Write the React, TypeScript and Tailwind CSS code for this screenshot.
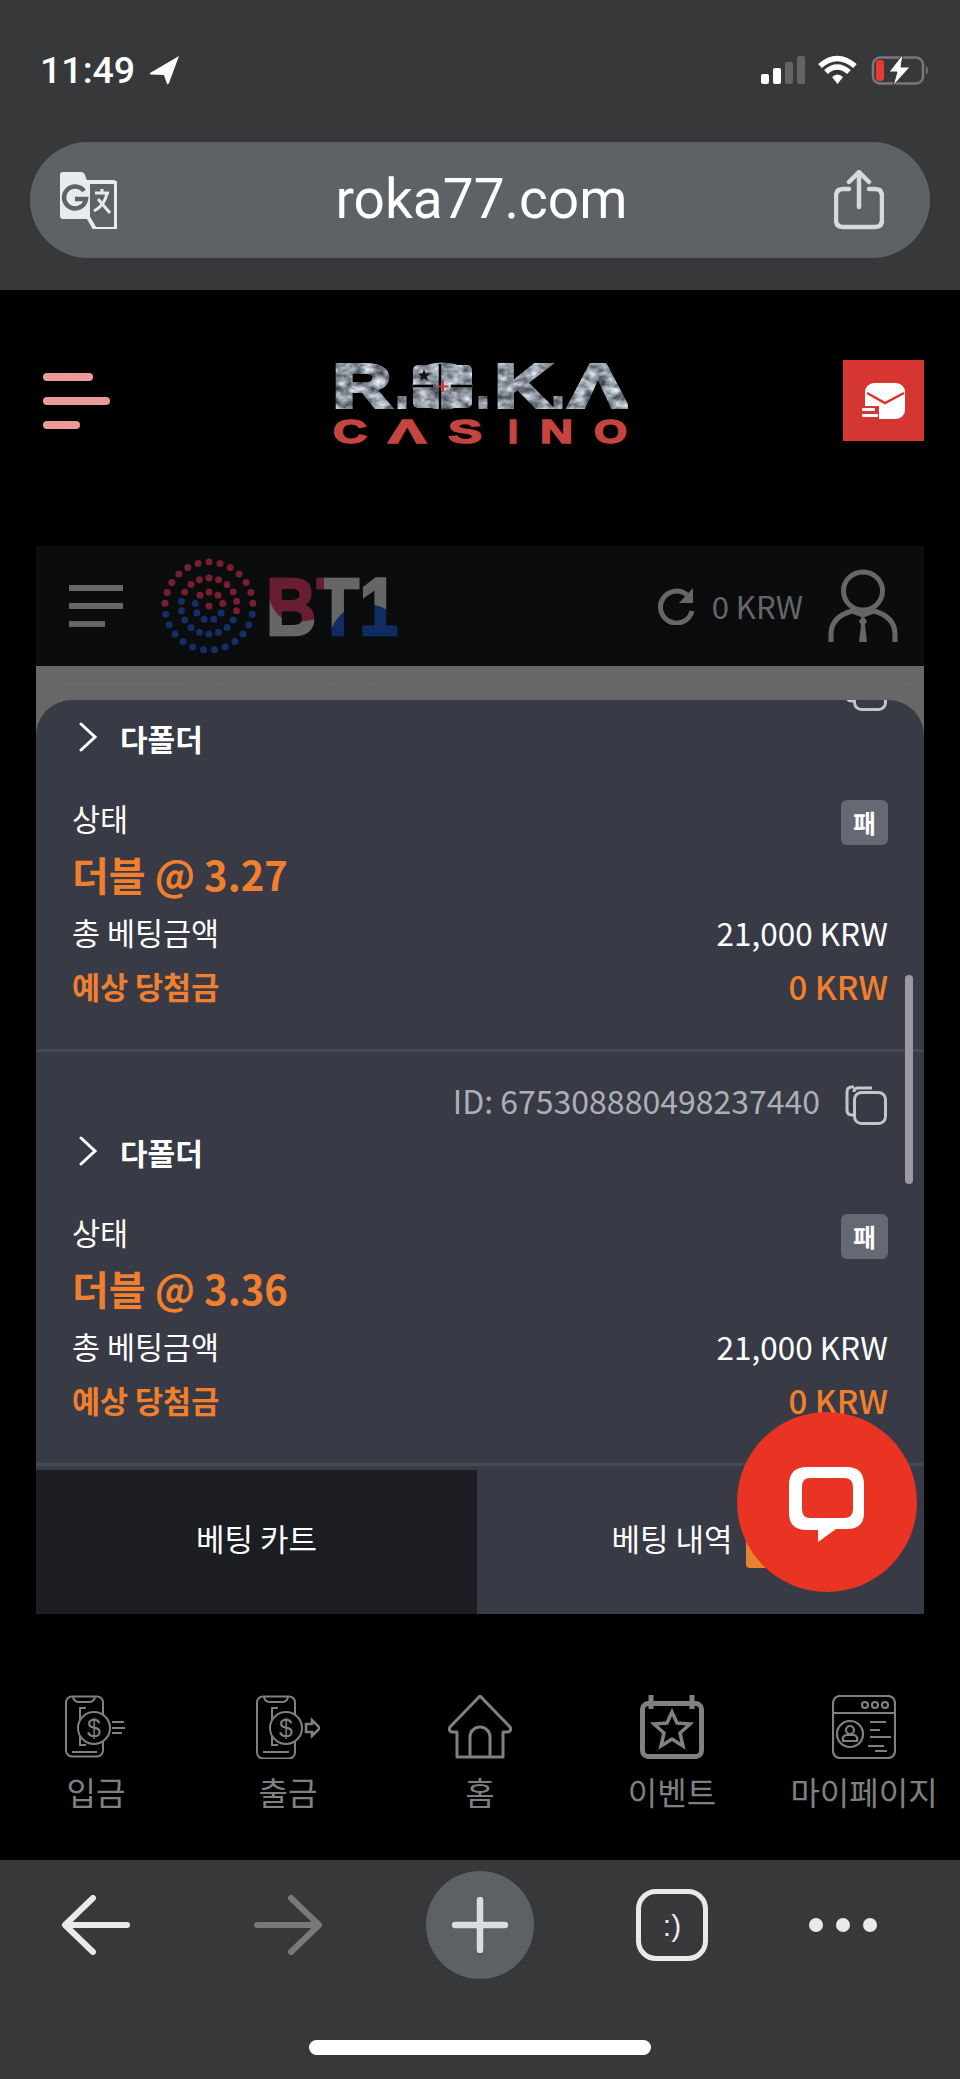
import React from 'react';

interface BetItem {
  id: string;
  odds: string;
}

const bets: BetItem[] = [
  { id: '675308880498237439', odds: '3.27' },
  { id: '675308880498237440', odds: '3.36' },
];

const sphereDots = () => {
  const rings = [
    { r: 44, n: 25 },
    { r: 28, n: 18 },
    { r: 14, n: 9 },
    { r: 0, n: 1 },
  ];
  const dots: { x: number; y: number; c: string }[] = [];
  rings.forEach((ring) => {
    for (let i = 0; i < ring.n; i++) {
      const a = (i / ring.n) * Math.PI * 2 - Math.PI / 2;
      const x = 46 + Math.cos(a) * ring.r;
      const y = 46 + Math.sin(a) * ring.r;
      const wave = Math.sin((x / 92) * Math.PI * 2) * 6;
      dots.push({ x, y, c: y + wave <= 46 ? '#74202f' : '#142f66' });
    }
  });
  return dots;
};

const CopyIcon = () => (
  <svg width="44" height="42" viewBox="0 0 44 42" fill="none" stroke="#c4c5ca" strokeWidth="3">
    <path d="M10 4 H8 Q3 4 3 9 V27 Q3 32 8 32 H9" />
    <path d="M14 5 Q10 5 10 9 M14 5 H28" />
    <rect x="10.500" y="9.500" width="31" height="31" rx="7" />
  </svg>
);

const Chevron = () => (
  <svg width="20" height="30" viewBox="0 0 20 30" fill="none" stroke="#fff" strokeWidth="3" strokeLinecap="round">
    <path d="M3 2 L17 15 L3 28" />
  </svg>
);

const BetRow = ({ bet }: { bet: BetItem }) => (
  <div className="flex flex-col border-b-[3px] border-[#464856] pl-[36px] pr-[36px] pb-[42px] pt-[30px]">
    <div className="flex h-[44px] items-center justify-end gap-[24px] text-[32px] text-[#aeafb6]">
      <span className="pb-[8px]">ID: {bet.id}</span>
      <CopyIcon />
    </div>
    <div className="mt-[5px] flex h-[40px] items-center gap-[22px] pl-[6px] text-[30px] font-bold text-white">
      <Chevron />
      <span className="pt-[3px]">다폴더</span>
    </div>
    <div className="mt-[43px] flex h-[45px] items-center justify-between text-[30.500px] text-white">
      <span className="pb-[8px]">상태</span>
      <span className="flex h-[45px] w-[47px] items-center justify-center rounded-[6px] bg-[#666873] text-[25px] font-bold">패</span>
    </div>
    <div className="mt-[7px] flex h-[44px] items-center text-[40px] font-bold text-[#f07f2e]">더블 @ {bet.odds}</div>
    <div className="mt-[17px] flex h-[40px] items-center justify-between text-[30.500px] text-white">
      <span>총 베팅금액</span>
      <span className="text-[31.500px]">21,000 KRW</span>
    </div>
    <div className="mt-[14px] flex h-[40px] items-center justify-between text-[30.500px] font-bold text-[#f07f2e]">
      <span>예상 당첨금</span>
      <span className="text-[33px] font-medium">0 KRW</span>
    </div>
  </div>
);

const StatusBar = () => (
  <div className="flex h-[142px] items-start justify-between pl-[40px] pr-[29px] pt-[46px]">
    <div className="flex items-center gap-[13px]">
      <span className="font-['Roboto',sans-serif] text-[37.500px] font-medium leading-[48px] text-white">11:49</span>
      <svg width="32" height="30" viewBox="0 0 32 30" fill="#fff">
        <path d="M31 1 L2 18 Q1 19 3 19.500 L16 20 L19 29 Q20 30 21 28 Z" />
      </svg>
    </div>
    <div className="flex items-center pt-[8px]">
      <svg width="170" height="32" viewBox="0 0 170 32">
        <rect x="0" y="20" width="8" height="10" rx="2" fill="#fff" />
        <rect x="12" y="14" width="8" height="16" rx="2" fill="#fff" />
        <rect x="24" y="8" width="8" height="22" rx="2" fill="#636466" />
        <rect x="36" y="2" width="8" height="28" rx="2" fill="#636466" />
        <path d="M59 12 Q76 -3 94 12" fill="none" stroke="#fff" strokeWidth="5.500" />
        <path d="M65 18 Q76 8 88 18" fill="none" stroke="#fff" strokeWidth="5.500" />
        <path d="M71 23 L76.500 30 L82 23 Q76.500 18 71 23 Z" fill="#fff" />
        <rect x="112" y="3.500" width="50" height="26" rx="7" fill="none" stroke="#77787a" strokeWidth="2.500" />
        <rect x="115" y="6" width="8" height="21" rx="3" fill="#e83a30" />
        <path d="M165 12 Q169 16 165 21 Z" fill="#77787a" />
        <path d="M142 0 L128 18 H136 L132 32 L149 13 H140 Z" fill="#fff" stroke="#37383a" strokeWidth="1" />
      </svg>
    </div>
  </div>
);

const UrlBar = () => (
  <div className="mx-[30px] flex h-[116px] items-center justify-between rounded-[58px] bg-[#5e6165] pl-[29px] pr-[46px]">
    <svg width="58" height="58" viewBox="0 0 58 58">
      <path d="M4 1 H22 Q25 1 26 4 L41 48 H4 Q1 48 1 45 V4 Q1 1 4 1 Z" fill="#e9eaec" />
      <path d="M29 11 H54 Q57 11 57 14 V55 Q57 58 54 58 H36 L29 46 Z" fill="#5e6165" stroke="#e9eaec" strokeWidth="4" />
      <path d="M25 20 A11 11 0 1 0 27 28 H16" fill="none" stroke="#5e6165" strokeWidth="4.500" />
      <path d="M36 22 H50 M43 18 V22 M48 22 Q46 34 35 40 M39 28 L51 42" fill="none" stroke="#e9eaec" strokeWidth="3" />
    </svg>
    <span className="ml-[12px] pb-[2px] font-['Roboto',sans-serif] text-[55px] font-normal leading-none text-white">roka77.com</span>
    <svg width="50" height="60" viewBox="0 0 50 60" fill="none" stroke="#d8d9dc" strokeWidth="4.500" strokeLinecap="round" strokeLinejoin="round">
      <path d="M15 19 H9 Q2 19 2 26 V50 Q2 57 9 57 H41 Q48 57 48 50 V26 Q48 19 41 19 H35" />
      <path d="M25 3 V37 M15 12 L25 2 L35 12" />
    </svg>
  </div>
);

const RokaLogo = () => {
  const top = [
    { t: 'R', x: 3, w: 58 },
    { t: '.', x: 66, w: 12 },
    { t: 'O', x: 82, w: 61 },
    { t: '.', x: 147, w: 12 },
    { t: 'K', x: 165, w: 56 },
    { t: '.', x: 222, w: 12 },
    { t: 'Λ', x: 239, w: 58 },
  ];
  const bottom = [
    { t: 'C', x: 3, w: 34 },
    { t: 'Λ', x: 58, w: 38 },
    { t: 'S', x: 118, w: 34 },
    { t: 'I', x: 178, w: 10 },
    { t: 'N', x: 210, w: 33 },
    { t: 'O', x: 264, w: 33 },
  ];
  return (
    <svg width="300" height="90" viewBox="0 0 300 90" aria-label="ROKA CASINO">
      <defs>
        <filter id="metal" x="0" y="0" width="100%" height="100%" colorInterpolationFilters="sRGB">
          <feTurbulence type="fractalNoise" baseFrequency="0.09 0.14" numOctaves="3" seed="4" result="n" />
          <feColorMatrix in="n" type="matrix" values="1 0 0 0 0.06 1 0 0 0 0.09 1 0 0 0 0.13 0 0 0 0 1" result="g" />
          <feComposite in="g" in2="SourceAlpha" operator="in" />
        </filter>
      </defs>
      <g filter="url(#metal)" fontFamily="'Liberation Sans', sans-serif" fontWeight="700" fontSize="61" fill="#aaa" stroke="#aaa" strokeWidth="4">
        {top.map((l, i) => (
          <text key={i} x={l.x} y={49} textLength={l.w} lengthAdjust="spacingAndGlyphs">{l.t}</text>
        ))}
        <rect x="83" y="7" width="59" height="43" rx="5" stroke="none" />
      </g>
      <path d="M110 6 V52 M83 28 H103 M121 28 H142" stroke="#000" strokeWidth="2.500" />
      <path d="M94 11 L95.500 15.500 L100 15.500 L96.500 18.500 L98 23 L94 20 L90 23 L91.500 18.500 L88 15.500 L92.500 15.500 Z" fill="#111" />
      <path d="M113 23 V34 M107.500 28.500 H118.500" stroke="#c93a3a" strokeWidth="2" />
      <g fontFamily="'Liberation Sans', sans-serif" fontWeight="700" fontSize="33" fill="#c44440" stroke="#c44440" strokeWidth="1.500">
        {bottom.map((l, i) => (
          <text key={i} x={l.x} y={85} textLength={l.w} lengthAdjust="spacingAndGlyphs">{l.t}</text>
        ))}
      </g>
    </svg>
  );
};

const Bt1Logo = () => (
  <svg width="280" height="96" viewBox="0 0 280 96" aria-label="BT1">
    <defs>
      <mask id="bt1mask" maskUnits="userSpaceOnUse" x="0" y="0" width="280" height="96">
        <text x="127" y="77" fontFamily="'Liberation Sans', sans-serif" fontWeight="700" fontSize="82" textLength="132" lengthAdjust="spacingAndGlyphs" fill="#fff" stroke="#fff" strokeWidth="2.500">BT1</text>
      </mask>
    </defs>
    {sphereDots().map((d, i) => (
      <circle key={i} cx={d.x + 24} cy={d.y + 2} r="3.500" fill={d.c} />
    ))}
    <g mask="url(#bt1mask)">
      <rect x="120" y="0" width="150" height="96" fill="#666" />
      <path d="M120 8 H185 V60 L160 64 Q135 66 128 33 Z" fill="#681d30" />
      <circle cx="228" cy="84" r="38" fill="#112c63" />
    </g>
  </svg>
);

const NavIcons: Record<string, React.ReactNode> = {
  deposit: (
    <svg width="64" height="64" viewBox="0 0 64 64" fill="none" stroke="#808080" strokeWidth="2">
      <rect x="2" y="1.500" width="37" height="60" rx="6" />
      <path d="M9 2 Q10 7 15 7 H25 Q30 7 31 2 M8 57 H33" />
      <path d="M22 13 H16 V50 H22" />
      <circle cx="30" cy="33" r="16" fill="#000" />
      <text x="30" y="42" textAnchor="middle" fontFamily="'Liberation Sans', sans-serif" fontSize="25" fill="#808080" stroke="none">$</text>
      <path d="M48 27 H60 M48 33 H61 M48 38 H58" />
    </svg>
  ),
  withdraw: (
    <svg width="64" height="64" viewBox="0 0 64 64" fill="none" stroke="#808080" strokeWidth="2">
      <rect x="1" y="1.500" width="38" height="62" rx="6" />
      <path d="M8 2 Q9 7 14 7 H26 Q31 7 32 2 M7 57 H33" />
      <path d="M22 13 H16 V50 H22" />
      <circle cx="30" cy="33" r="16" fill="#000" />
      <text x="30" y="42" textAnchor="middle" fontFamily="'Liberation Sans', sans-serif" fontSize="25" fill="#808080" stroke="none">$</text>
      <path d="M50 29 H56 V25 L64 33 L56 41 V37 H50 Z" strokeWidth="2.500" />
    </svg>
  ),
  home: (
    <svg width="64" height="64" viewBox="0 0 64 64" fill="none" stroke="#808080" strokeWidth="3" strokeLinejoin="round">
      <path d="M32 1 L2 32 Q0 36 4 37 H9 V62 H55 V37 H60 Q64 36 62 32 Z" />
      <path d="M22 62 V42 A10 10 0 0 1 42 42 V62" />
    </svg>
  ),
  event: (
    <svg width="64" height="64" viewBox="0 0 64 64" fill="none" stroke="#808080" strokeWidth="5">
      <rect x="2.500" y="8.500" width="59" height="53" rx="6" />
      <path d="M11 0 V14 M52 0 V14" />
      <path d="M32 17 L37 28 L50 29 L40 38 L43 51 L32 44 L21 51 L24 38 L14 29 L27 28 Z" strokeWidth="3.500" />
    </svg>
  ),
  mypage: (
    <svg width="64" height="64" viewBox="0 0 64 64" fill="none" stroke="#808080" strokeWidth="2.200">
      <rect x="1" y="1" width="62" height="62" rx="7" />
      <path d="M1 18 H63" />
      <circle cx="33" cy="10" r="3" />
      <circle cx="43" cy="10" r="3" />
      <circle cx="53" cy="10" r="3" />
      <circle cx="18" cy="39" r="13" />
      <circle cx="18" cy="35" r="4" />
      <path d="M11 46 Q10 41 14 40 H22 Q26 41 25 46 Z" />
      <path d="M38 27 H54 M38 35 H48 M38 42 H59 M36 51 H52 M43 56 H55" />
    </svg>
  ),
};

const navItems = [
  { key: 'deposit', label: '입금' },
  { key: 'withdraw', label: '출금' },
  { key: 'home', label: '홈' },
  { key: 'event', label: '이벤트' },
  { key: 'mypage', label: '마이페이지' },
];

const App: React.FC = () => {
  return (
    <div className="relative flex h-[2079px] w-[960px] flex-col overflow-hidden bg-black font-['Noto_Sans_CJK_KR',sans-serif]">
      <div className="h-[290px] shrink-0 bg-[#37383a]">
        <StatusBar />
        <UrlBar />
      </div>

      {/* site header */}
      <div className="grid h-[256px] shrink-0 grid-cols-[1fr_auto_1fr] items-start pt-[68px]">
        <div className="ml-[43px] mt-[15px] flex flex-col gap-[16px]">
          <div className="h-[8px] w-[50px] rounded-full bg-[#ea9a98]" />
          <div className="h-[8px] w-[67px] rounded-full bg-[#ea9a98]" />
          <div className="h-[8px] w-[37px] rounded-full bg-[#ea9a98]" />
        </div>
        <RokaLogo />
        <div className="mr-[36px] mt-[2px] flex h-[81px] w-[81px] items-center justify-center justify-self-end bg-[#d63632]">
          <svg width="48" height="40" viewBox="0 0 48 40">
            <rect x="5" y="2" width="40" height="36" rx="9" fill="#fff" />
            <path d="M7 12 L25 22 L44 12" fill="none" stroke="#d63632" strokeWidth="2.500" />
            <rect x="0" y="25" width="19" height="14" fill="#d63632" />
            <rect x="2" y="27" width="13" height="3" rx="1" fill="#fff" />
            <rect x="2" y="33" width="16" height="3" rx="1" fill="#fff" />
          </svg>
        </div>
      </div>

      {/* embedded game panel */}
      <div className="mx-[36px] flex h-[1068px] shrink-0 flex-col">
        <div className="flex h-[120px] shrink-0 items-center bg-[#0b0c0e] pl-[33px] pr-[26px]">
          <div className="flex flex-col gap-[12px]">
            <div className="h-[6px] w-[54px] bg-[#666]" />
            <div className="h-[6px] w-[54px] bg-[#666]" />
            <div className="h-[6px] w-[36px] bg-[#666]" />
          </div>
          <div className="ml-[16px]">
            <Bt1Logo />
          </div>
          <div className="ml-auto flex items-center">
            <svg width="38" height="38" viewBox="0 0 38 38" fill="none">
              <path d="M31 9 A16 16 0 1 0 35 24" stroke="#666" strokeWidth="5" />
              <path d="M36 1 V16 H22 Z" fill="#666" />
            </svg>
            <span className="ml-[17px] text-[31px] text-[#666]">0 KRW</span>
            <svg className="ml-[25px]" width="70" height="74" viewBox="0 0 70 74" fill="none" stroke="#666" strokeWidth="5">
              <ellipse cx="35" cy="22" rx="19.500" ry="19" />
              <path d="M3 73 V65 Q3 48 24 42 L35 46 L46 42 Q67 48 67 65 V73" />
              <path d="M35 47 L31 52 L33 56 L31 73 H39 L37 56 L39 52 Z" fill="#666" stroke="none" />
            </svg>
          </div>
        </div>

        <div className="relative flex min-h-0 flex-1 flex-col bg-[#676767]">
          <div className="flex h-[34px] shrink-0 items-end gap-[12px] pl-[18px]">
            <div className="h-[17px] w-[144px] rounded-t-[18px] border-t border-[#6f6f6f]" />
            <div className="h-[17px] w-[145px] rounded-t-[18px] border-t border-[#6d6d6d]" />
            <div className="h-[17px] w-[191px] rounded-t-[18px] border-t border-[#6d6d6d]" />
            <div className="ml-[278px] h-[17px] w-[89px] rounded-t-[18px] border-t border-[#6d6d6d]" />
          </div>
          <div className="relative min-h-0 flex-1 overflow-hidden rounded-t-[36px] bg-[#383a46]">
            <div className="-mt-[62px] flex flex-col">
              {bets.map((bet) => (
                <BetRow key={bet.id} bet={bet} />
              ))}
            </div>
            <div className="absolute right-[11px] top-[275px] h-[209px] w-[8px] rounded-full bg-[#9a9aa0]" />
          </div>
          <div className="grid h-[144px] shrink-0 grid-cols-[441px_1fr] text-[31px] text-white">
            <div className="flex items-center justify-center bg-[#1c1e23] pb-[8px]">베팅 카트</div>
            <div className="flex items-center justify-center gap-[13px] bg-[#383a46]">
              <span className="pb-[8px]">베팅 내역</span>
              <span className="mt-[6px] h-[46px] w-[44px] rounded-[4px] bg-[#e8822e]" />
            </div>
          </div>
        </div>
      </div>

      {/* bottom site nav */}
      <div className="grid min-h-0 flex-1 grid-cols-5 pt-[1px]">
        {navItems.map((item) => (
          <div key={item.key} className="flex flex-col items-center">
            <div className="mt-[80px] h-[64px] w-[64px]">{NavIcons[item.key]}</div>
            <span className="mt-[12px] whitespace-nowrap text-[32px] leading-[40px] text-[#808080]">{item.label}</span>
          </div>
        ))}
      </div>

      {/* browser toolbar */}
      <div className="flex h-[219px] shrink-0 flex-col bg-[#37383a]">
        <div className="grid h-[130px] grid-cols-5 items-center">
          <div className="flex justify-center">
            <svg width="70" height="60" viewBox="0 0 70 60" fill="none" stroke="#e8e9eb" strokeWidth="6" strokeLinecap="round" strokeLinejoin="round">
              <path d="M66 30 H6 M32 3 L4 30 L32 57" />
            </svg>
          </div>
          <div className="flex justify-center">
            <svg width="70" height="60" viewBox="0 0 70 60" fill="none" stroke="#77797b" strokeWidth="6" strokeLinecap="round" strokeLinejoin="round">
              <path d="M4 30 H64 M38 3 L66 30 L38 57" />
            </svg>
          </div>
          <div className="flex justify-center">
            <div className="flex h-[108px] w-[108px] items-center justify-center rounded-full bg-[#5d6064]">
              <svg width="56" height="56" viewBox="0 0 56 56" stroke="#dcdde0" strokeWidth="6.500" strokeLinecap="round">
                <path d="M28 3 V53 M3 28 H53" />
              </svg>
            </div>
          </div>
          <div className="flex justify-center">
            <div className="flex h-[72px] w-[72px] items-center justify-center rounded-[20px] border-[5px] border-[#e8e9eb] font-['Liberation_Sans',sans-serif] text-[30px] text-[#e8e9eb]">:)</div>
          </div>
          <div className="flex justify-start gap-[13px] pl-[41px]">
            <div className="h-[14px] w-[14px] rounded-full bg-[#e8e9eb]" />
            <div className="h-[14px] w-[14px] rounded-full bg-[#e8e9eb]" />
            <div className="h-[14px] w-[14px] rounded-full bg-[#e8e9eb]" />
          </div>
        </div>
        <div className="mx-auto mt-[50px] h-[15px] w-[342px] rounded-full bg-white" />
      </div>

      {/* chat launcher */}
      <div className="absolute left-[737px] top-[1412px] flex h-[180px] w-[180px] items-center justify-center rounded-full bg-[#e93323]">
        <svg className="mt-[6px]" width="76" height="76" viewBox="0 0 76 76" fill="#fff">
          <path fillRule="evenodd" d="M18 0 H58 Q75 0 75 18 V46 Q75 62 58 62 H47 L29 75 V63 H18 Q0 63 0 46 V18 Q0 0 18 0 Z M21 11 Q13 11 13 20 V42 Q13 51 21 51 H55 Q64 51 64 42 V20 Q64 11 55 11 Z" />
        </svg>
      </div>
    </div>
  );
};

export default App;
